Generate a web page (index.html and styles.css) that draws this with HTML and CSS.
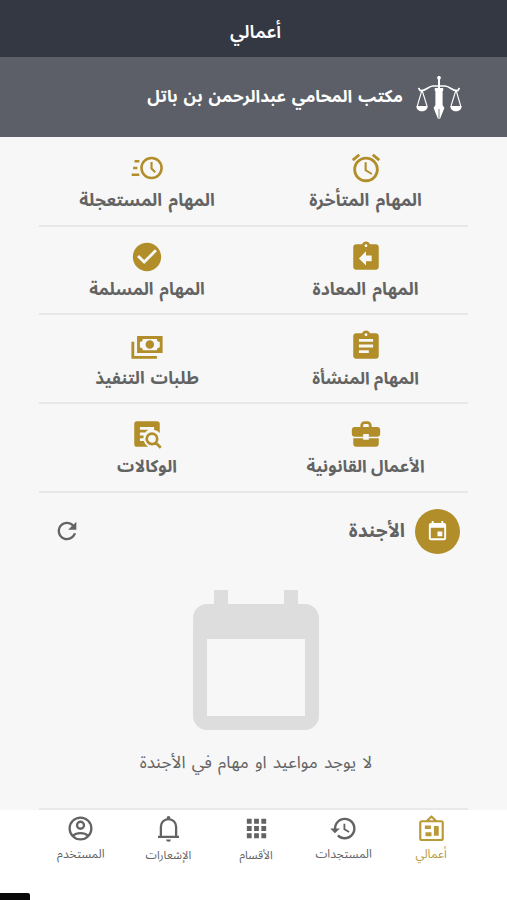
FILE: index.html
```html
<!DOCTYPE html>
<html lang="ar" dir="rtl">
<head>
<meta charset="utf-8">
<title>أعمالي</title>
<link rel="stylesheet" href="styles.css">
</head>
<body>
<header class="topbar"><h1 class="title">أعمالي</h1></header>
<section class="office">
  <svg class="logo" viewBox="0 0 48 48" fill="none" stroke="currentColor">
    <path d="M24 3v12" stroke-width="2"/><circle cx="24" cy="4.800" r="1.900" fill="currentColor" stroke="none"/>
    <path d="M5 17.500c5 1.500 8-4.500 13-4.500h12c5 0 8 6 13 4.500M5.500 18l-2-3M42.500 18l2-3" stroke-width="1.700"/>
    <path d="M7 17L2.300 33M7 17l5 16M41 17l-5 16M41 17l4.700 16" stroke-width="1.100"/>
    <path d="M1.300 33h11.400c0 7-11.400 7-11.400 0zM35.300 33h11.400c0 7-11.400 7-11.400 0zM19.800 15h8.400v3h-.6v14l1.800 3-4.400 11h-2l-4.400-11 1.800-3V18h-.6z" fill="currentColor" stroke="none"/>
    <path class="nib" d="M24 46V36" stroke-width=".8"/>
  </svg>
  <h2 class="office-name">مكتب المحامي عبدالرحمن بن باتل</h2>
</section>
<main class="content">
  <div class="tasks">
    <div class="task"><svg class="icon" viewBox="0 0 24 24"><path d="M22 5.720l-4.600-3.860-1.290 1.530 4.600 3.860L22 5.720zM7.880 3.390L6.600 1.860 2 5.710l1.290 1.530 4.590-3.850zM12.500 8H11v6l4.750 2.850.75-1.230-4-2.370V8zM12 4c-4.970 0-9 4.030-9 9s4.020 9 9 9a9 9 0 0 0 0-18zm0 16c-3.870 0-7-3.130-7-7s3.130-7 7-7 7 3.130 7 7-3.130 7-7 7z"/></svg><span class="label loose">المهام المتأخرة</span></div>
    <div class="task"><svg class="icon" viewBox="0 0 24 24"><g fill="none" stroke="currentColor" stroke-width="1.800"><circle cx="15.200" cy="12" r="7.100"/><path d="M15.200 7.800v4.600l2.600 2.600" stroke-width="1.500"/><path d="M3.200 7.200h3.400M2.200 12h3M1.200 16.800h5.400" stroke-width="1.800"/></g></svg><span class="label loose">المهام المستعجلة</span></div>
    <div class="task"><svg class="icon" viewBox="0 0 24 24"><path d="M19 3h-4.180C14.400 1.840 13.300 1 12 1s-2.400.84-2.820 2H5c-1.100 0-2 .9-2 2v14c0 1.100.9 2 2 2h14c1.100 0 2-.9 2-2V5c0-1.100-.9-2-2-2zm-7 0c.55 0 1 .45 1 1s-.45 1-1 1-1-.45-1-1 .45-1 1-1zm4 12h-4v3l-5-5 5-5v3h4v4z"/></svg><span class="label loose">المهام المعادة</span></div>
    <div class="task"><svg class="icon" viewBox="0 0 24 24"><path d="M12 2C6.480 2 2 6.480 2 12s4.480 10 10 10 10-4.480 10-10S17.520 2 12 2zm-2 15l-5-5 1.410-1.410L10 14.170l7.590-7.590L19 8l-9 9z"/></svg><span class="label wide">المهام المسلمة</span></div>
    <div class="task"><svg class="icon" viewBox="0 0 24 24"><path d="M19 3h-4.180C14.400 1.840 13.300 1 12 1s-2.400.84-2.820 2H5c-1.100 0-2 .9-2 2v14c0 1.100.9 2 2 2h14c1.100 0 2-.9 2-2V5c0-1.100-.9-2-2-2zm-7 0c.55 0 1 .45 1 1s-.45 1-1 1-1-.45-1-1 .45-1 1-1zm2 14H7v-2h7v2zm3-4H7v-2h10v2zm0-4H7V7h10v2z"/></svg><span class="label">المهام المنشأة</span></div>
    <div class="task"><svg class="icon" viewBox="0 0 24 24"><path fill-rule="evenodd" d="M5 5h18v12H5zM9 7a2 2 0 0 1-2 2v4a2 2 0 0 1 2 2h10a2 2 0 0 1 2-2V9a2 2 0 0 1-2-2zM14 8a3 3 0 1 1 0 6 3 3 0 0 1 0-6zM1 9h2v10h16v2H1z"/></svg><span class="label wide">طلبات التنفيذ</span></div>
    <div class="task"><svg class="icon" viewBox="0 0 24 24"><path d="M10 16v-1H3.010L3 19c0 1.110.89 2 2 2h14c1.110 0 2-.89 2-2v-4h-7v1h-4zm10-9h-4V6a3 3 0 0 0-3-3h-2a3 3 0 0 0-3 3v1H4c-1.100 0-2 .9-2 2v3c0 1.110.89 2 2 2h6v-2h4v2h6c1.100 0 2-.9 2-2V9c0-1.100-.9-2-2-2zm-6 0h-4V6a1 1 0 0 1 1-1h2a1 1 0 0 1 1 1v1z"/></svg><span class="label">الأعمال القانونية</span></div>
    <div class="task"><svg class="icon" viewBox="0 0 24 24"><path d="M5 3h14a2 2 0 0 1 2 2v6.300A6 6 0 0 0 16.500 9H17V7H7v2h6a6 6 0 0 0-2.300 2H7v2h2.700a6 6 0 0 0-.2 2H7v2h2.800a6 6 0 0 0 3 4H5a2 2 0 0 1-2-2V5a2 2 0 0 1 2-2z"/><path d="M15.500 11.700a3.700 3.700 0 1 0 0 7.400 3.700 3.700 0 0 0 0-7.400zM18 18l3.700 3.700" fill="none" stroke="currentColor" stroke-width="1.900"/></svg><span class="label">الوكالات</span></div>
  </div>
  <section class="agenda">
    <span class="badge"><svg viewBox="0 0 24 24"><path d="M17 12h-5v5h5v-5zM16 1v2H8V1H6v2H5c-1.110 0-1.990.9-1.990 2L3 19c0 1.100.89 2 2 2h14c1.100 0 2-.9 2-2V5c0-1.100-.9-2-2-2h-1V1h-2zm3 18H5V8h14v11z"/></svg></span>
    <h3 class="agenda-title">الأجندة</h3>
    <svg class="refresh" viewBox="0 0 24 24"><path d="M17.650 6.350C16.200 4.900 14.210 4 12 4c-4.420 0-7.990 3.580-7.990 8s3.570 8 7.990 8c3.730 0 6.840-2.550 7.730-6h-2.080c-.82 2.330-3.040 4-5.650 4-3.310 0-6-2.690-6-6s2.690-6 6-6c1.660 0 3.140.69 4.220 1.780L13 11h7V4l-2.350 2.350z"/></svg>
  </section>
  <section class="empty">
    <svg class="empty-icon" viewBox="0 0 24 24"><path d="M19 3h-1V1h-2v2H8V1H6v2H5c-1.110 0-1.990.9-1.990 2L3 19c0 1.100.89 2 2 2h14c1.100 0 2-.9 2-2V5c0-1.100-.9-2-2-2zm0 16H5V8h14v11z"/></svg>
    <p class="empty-text">لا يوجد مواعيد او مهام في الأجندة</p>
  </section>
</main>
<nav class="tabs">
  <a class="tab active"><svg viewBox="0 0 24 24"><path fill="none" stroke="currentColor" stroke-width="1.800" stroke-linejoin="round" d="M4 6h16a1.300 1.300 0 0 1 1.300 1.300v12.900a1.300 1.300 0 0 1-1.300 1.300H4a1.300 1.300 0 0 1-1.300-1.300V7.300A1.300 1.300 0 0 1 4 6zM8 6l4-4 4 4"/><path d="M6.500 9.500h5v3h-5zM14 10h4v8h-4zM7 15h5v3.500H7z"/></svg><span>أعمالي</span></a>
  <a class="tab"><svg viewBox="0 0 24 24"><path d="M13 3c-4.970 0-9 4.030-9 9H1l3.890 3.890.07.14L9 12H6c0-3.870 3.130-7 7-7s7 3.130 7 7-3.130 7-7 7c-1.930 0-3.680-.79-4.940-2.060l-1.420 1.420A8.950 8.950 0 0 0 13 21a9 9 0 0 0 0-18zm-1 5v5l4.280 2.540.72-1.210-3.500-2.080V8H12z"/></svg><span>المستجدات</span></a>
  <a class="tab"><svg viewBox="0 0 24 24"><path d="M4 8h4V4H4v4zm6 12h4v-4h-4v4zm-6 0h4v-4H4v4zm0-6h4v-4H4v4zm6 0h4v-4h-4v4zm6-10v4h4V4h-4zm-6 4h4V4h-4v4zm6 6h4v-4h-4v4zm0 6h4v-4h-4v4z"/></svg><span class="compact">الأقسام</span></a>
  <a class="tab"><svg viewBox="0 0 24 24"><path d="M3.300 19h17.400M5.700 18.500V10.500a6.300 6.300 0 0 1 12.600 0v8" fill="none" stroke="currentColor" stroke-width="1.900"/><circle cx="12" cy="3.200" r="1.500"/><path d="M10 21h4a2 2 0 0 1-4 0z"/></svg><span class="compact">الإشعارات</span></a>
  <a class="tab"><svg viewBox="0 0 24 24"><g fill="none" stroke="currentColor" stroke-width="1.900"><circle cx="12" cy="12" r="9"/><circle cx="12" cy="9.300" r="2.900"/><path d="M5.600 18.200c3.200-3.100 9.600-3.100 12.800 0"/></g></svg><span>المستخدم</span></a>
  <i class="corner"></i>
</nav>
</body>
</html>
```
FILE: styles.css
```css
* { box-sizing: border-box; margin: 0; padding: 0; }
body { width: 507px; height: 900px; overflow: hidden; background: #f7f7f7; color: #636363; font-family: "Noto Sans Arabic", "Noto Sans", "DejaVu Sans", sans-serif; }
svg { display: block; fill: currentColor; flex: none; }
span, h1, h2, h3, p { white-space: nowrap; }
.topbar { height: 57px; background: #343843; color: #fff; display: flex; justify-content: center; padding: 19px 0 0 4px; }
.title { font-size: 18.500px; line-height: 28px; font-weight: 600; }
.office { height: 80px; background: #5c5f67; color: #fff; display: flex; align-items: center; padding: 0 44px; gap: 12px; }
.logo { width: 48px; height: 48px; fill: none; }
.nib { stroke: #5c5f67; }
.office-name { font-size: 17px; line-height: 26px; font-weight: 700; word-spacing: 1.500px; }
.content { height: 673px; margin: 0 39px; border-bottom: 2px solid #e9e9e9; }
.tasks { display: grid; grid-template-columns: 205px 224px; grid-template-rows: 90px 88px 89px 89px; }
.task { display: flex; flex-direction: column; align-items: center; padding-top: 13px; border-bottom: 2px solid #e8e8e8; }
.task:first-child, .task:nth-child(2), .task:nth-child(5), .task:nth-child(6) { padding-top: 14px; }
.task:nth-child(even) { padding-right: 8px; }
.icon { width: 34px; height: 34px; color: #b18e2a; }
.label { font-size: 17px; line-height: 32px; font-weight: 700; }
.loose { font-size: 17.500px; word-spacing: 2px; }
.wide { font-size: 17.200px; word-spacing: 1.500px; }
.agenda { height: 78px; display: flex; align-items: center; padding: 0 8px 2px 14px; }
.badge { width: 45px; height: 45px; border-radius: 50%; background: #b18e2a; color: #fff; display: grid; place-items: center; }
.badge svg { width: 23px; height: 23px; }
.agenda-title { font-size: 19px; line-height: 30px; font-weight: 700; margin-right: 10px; }
.refresh { width: 28px; height: 28px; margin-right: auto; }
.empty { display: flex; flex-direction: column; align-items: center; padding: 12px 0 0 5px; }
.empty-icon { width: 168px; height: 168px; color: #ddd; }
.empty-text { font-size: 17px; line-height: 25px; word-spacing: 1.800px; }
.tabs { height: 90px; background: #fff; display: flex; padding: 4px 32px 0 37px; position: relative; }
.tab { flex: 1; display: flex; flex-direction: column; align-items: center; gap: 2px; font-size: 12px; line-height: 20px; }
.tab svg { width: 29px; height: 29px; }
.tab .compact { font-size: 11.500px; }
.active { color: #b99a3b; }
.corner { position: absolute; left: 0; bottom: 0; width: 30px; height: 7px; background: #080808; border-top-right-radius: 2px; }
```
